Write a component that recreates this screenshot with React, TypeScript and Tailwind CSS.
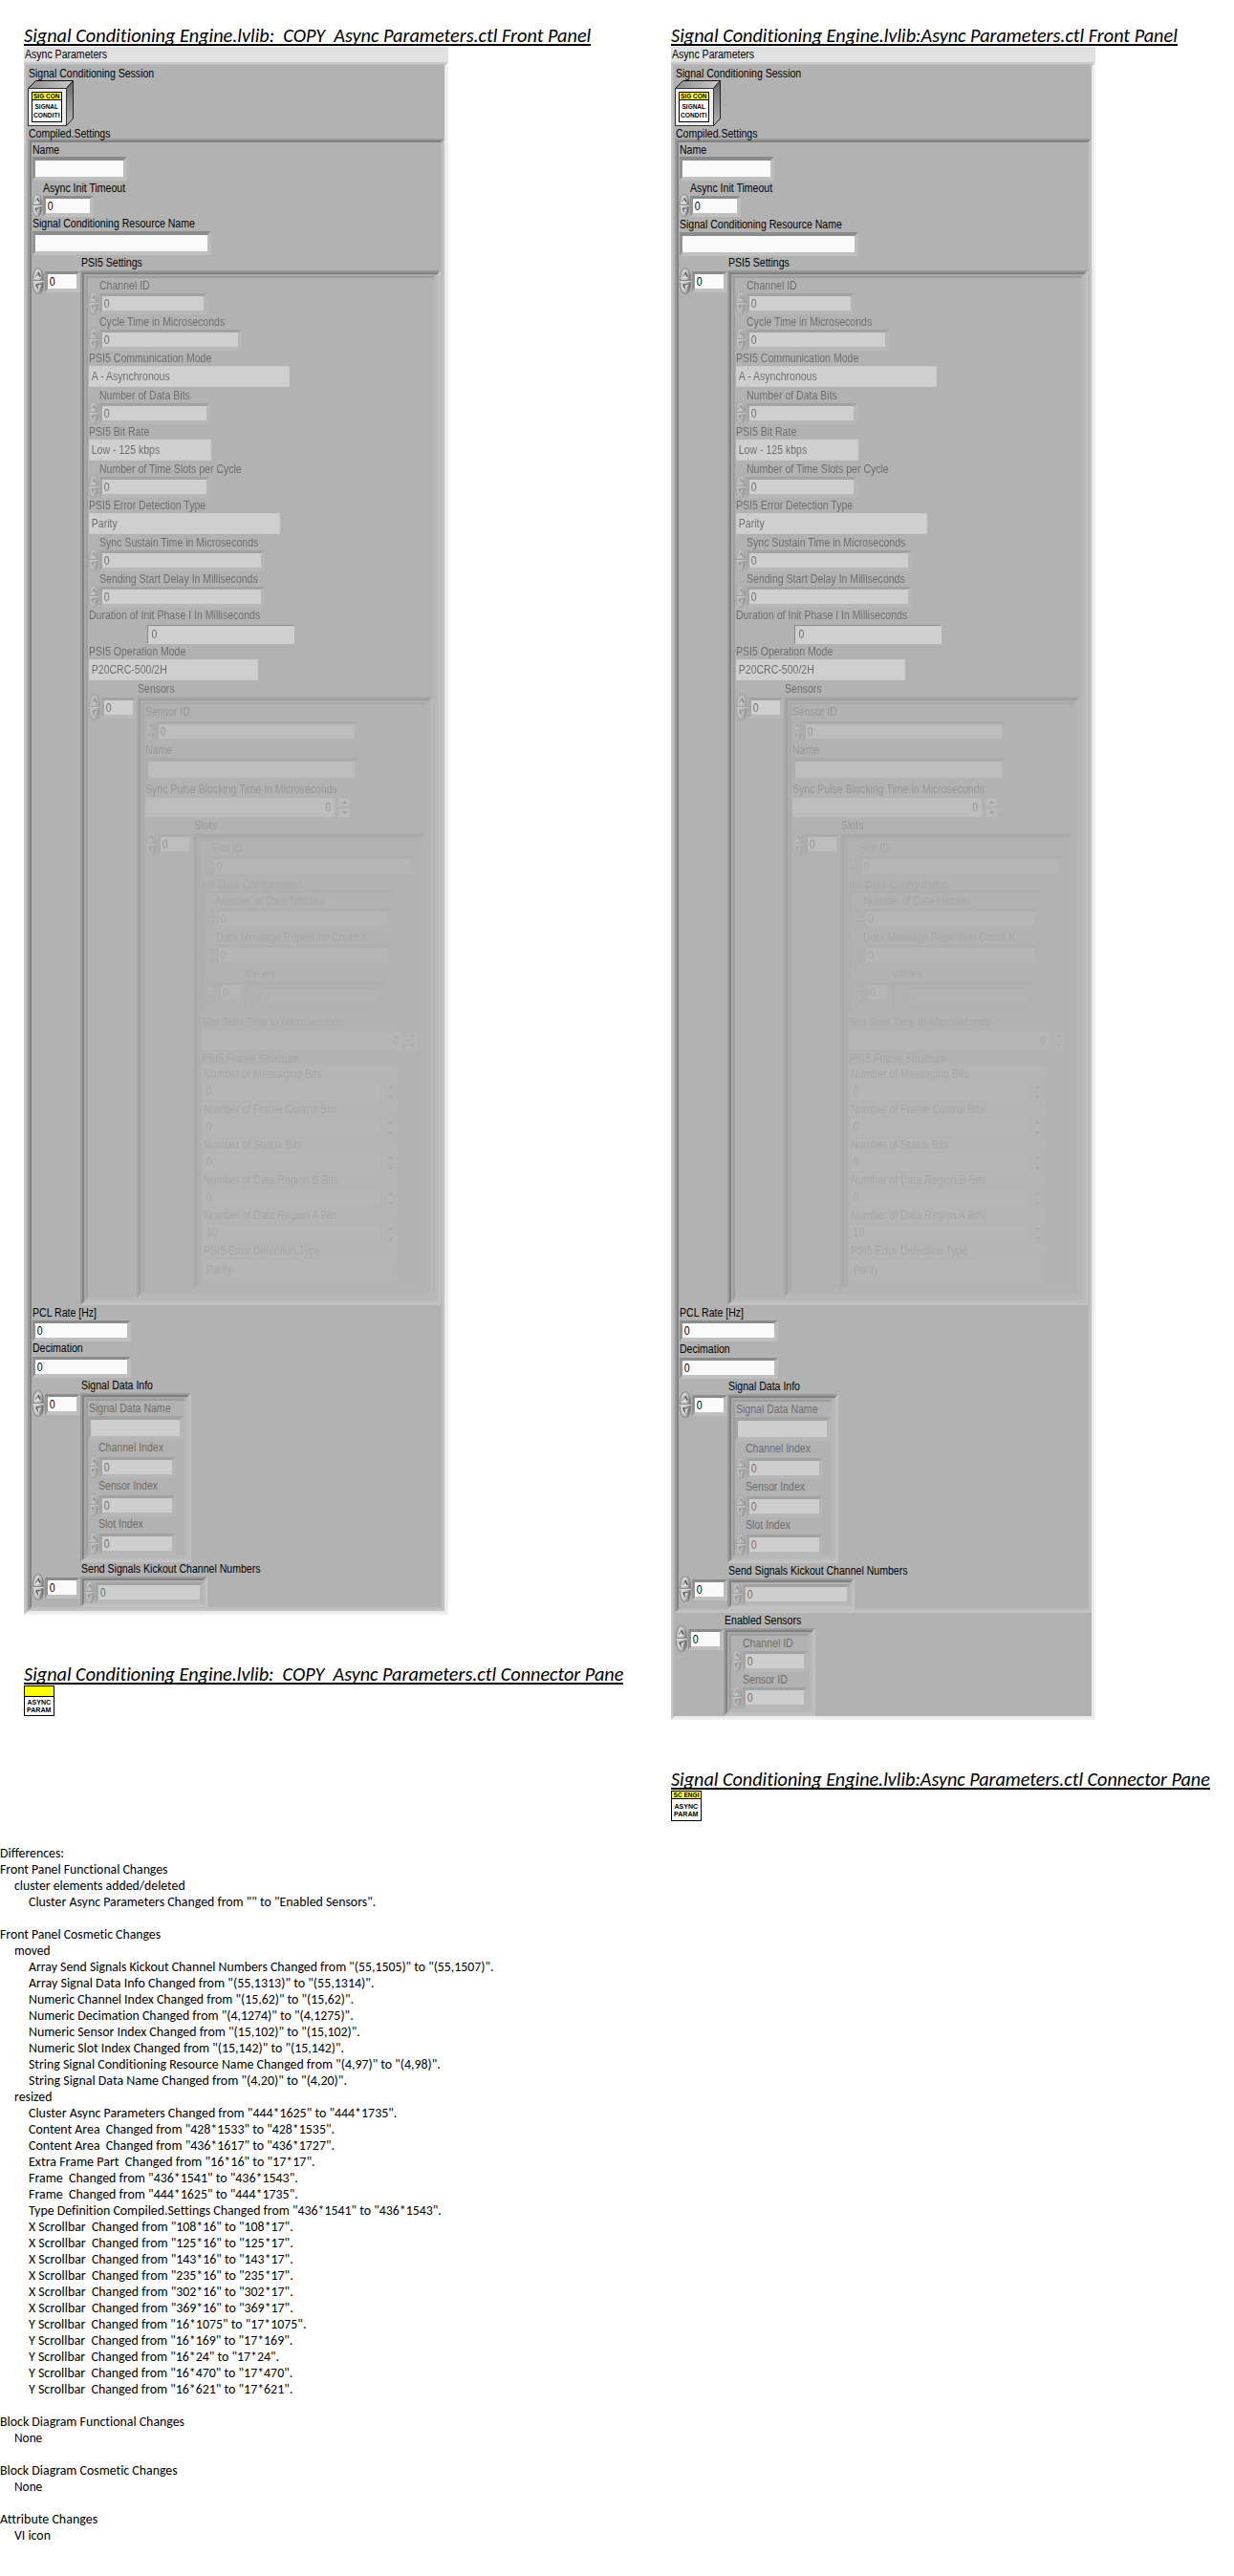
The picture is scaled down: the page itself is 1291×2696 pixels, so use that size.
import { useLayoutEffect, useRef, useState, type ReactNode } from "react";
import clsx from "clsx";

const SANS = "font-['Liberation_Sans',Arial,sans-serif]";
const HUMANIST = "font-[Carlito,Calibri,Lato,sans-serif]";

/* Text set to a given measure, whatever the natural width of the font. */
function FitText({ children, width, className }: { children: string; width: number; className?: string }) {
  const ref = useRef<HTMLSpanElement>(null);
  const [scale, setScale] = useState(1);
  useLayoutEffect(() => {
    if (ref.current) setScale(width / ref.current.offsetWidth);
  }, [width]);
  return (
    <span
      ref={ref}
      className={clsx("block w-max origin-left whitespace-pre text-black [font-variant-ligatures:none]", HUMANIST, className)}
      style={{ transform: `scaleX(${scale})` }}
    >
      {children}
    </span>
  );
}

/* ---------- basic controls ---------- */

function Label({ children, className }: { children: string; className?: string }) {
  return (
    <div className={clsx("h-[14px] pt-px", className)}>
      <span className={clsx("block w-max origin-left scale-x-[0.878] text-[12px] leading-[14px] whitespace-pre text-black", SANS)}>
        {children}
      </span>
    </div>
  );
}

function Value({ children, className }: { children?: string; className?: string }) {
  return (
    <span className={clsx("block w-max origin-left scale-x-[0.878] text-[12px] whitespace-pre text-black", SANS, className)}>
      {children}
    </span>
  );
}

const BEVEL = "border-t-[#8b8b8b] border-l-[#939393] border-r-[#bcbcbc] border-b-[#c0c0c0]";

function Field({ value, className }: { value?: string; className?: string }) {
  return (
    <div className={clsx("h-[22px] shrink-0 border-t-[3px] border-r-4 border-b-4 border-l-[3px] bg-[#fafafa]", BEVEL, className)}>
      <Value className="pl-[2px] leading-[16px]">{value}</Value>
    </div>
  );
}

function StringField({ className }: { className?: string }) {
  return <div className={clsx("h-[25px] shrink-0 border-4 border-l-[3px] bg-[#fafafa]", BEVEL, className)} />;
}

function Spinner({ className }: { className?: string }) {
  return (
    <svg viewBox="0 0 12 24" preserveAspectRatio="none" className={clsx("shrink-0", className)}>
      <defs>
        <linearGradient id="knob" x1="0" x2="1" y1="0" y2="0.25">
          <stop offset="0" stopColor="#a2a2a2" />
          <stop offset="0.35" stopColor="#d6d6d6" />
          <stop offset="0.7" stopColor="#bdbdbd" />
          <stop offset="1" stopColor="#6e6e6e" />
        </linearGradient>
      </defs>
      <path d="M6 0.6C9 0.6 11 5 11 12S9 23.4 6 23.4 1 19 1 12 3 0.6 6 0.6Z" fill="url(#knob)" stroke="#8c8c8c" strokeWidth="0.9" />
      <path d="M1 11.5h10" stroke="#858585" strokeWidth="1" />
      <path d="M1 12.5h10" stroke="#dedede" strokeWidth="1" />
      <path d="M3.6 8.6 6 4.6" fill="none" stroke="#8a8a8a" strokeWidth="1" />
      <path d="M4 8.6h4" fill="none" stroke="#f0f0f0" strokeWidth="1" />
      <path d="M6 4.4 7.8 8.4" stroke="#3c3c3c" strokeWidth="1" />
      <path d="M4 15.2h4M4 15.4 6 19" fill="none" stroke="#4a4a4a" strokeWidth="1" />
      <path d="M8 15.4 6 19" stroke="#e8e8e8" strokeWidth="1" />
    </svg>
  );
}

function Num({ w, className }: { w: string; className?: string }) {
  return (
    <div className={clsx("flex h-[24px] items-end", className)}>
      <Spinner className="h-[24px] w-[12px]" />
      <Field value="0" className={w} />
    </div>
  );
}

function Ring({ children, w, ticks = true }: { children: string; w: string; ticks?: boolean }) {
  return (
    <div className={clsx("relative mt-[2px] mb-px ml-px h-[22px] border border-[#f0f0f0] bg-[#fafafa]", w)}>
      <Value className="pl-[2px] leading-[21px]">{children}</Value>
      {ticks && (
        <>
          <i className="absolute top-0 left-[11px] h-[3px] w-px bg-[#b8b8b8]" />
          <i className="absolute bottom-0 left-[11px] h-[2px] w-px bg-[#b8b8b8]" />
        </>
      )}
    </div>
  );
}

function Arrow({ down, className }: { down?: boolean; className?: string }) {
  return (
    <span className={clsx("flex items-center justify-center border border-[#d8d8d8] bg-[#f0f0f0]", className)}>
      <svg viewBox="0 0 7 4" className="h-[3px] w-[7px]">
        <path d={down ? "M0 0h7L3.5 4z" : "M0 4h7L3.5 0z"} fill="#303030" />
      </svg>
    </span>
  );
}

function SystemNumeric({ w }: { w: string }) {
  return (
    <div className="mt-[3px] mb-px ml-px flex h-[20px] gap-1">
      <div className={clsx("flex justify-end border border-[#eeeeee] bg-[#fafafa]", w)}>
        <Value className="origin-right pr-[3px] leading-[19px]">0</Value>
      </div>
      <div className="flex flex-col justify-between">
        <Arrow className="h-[9px] w-[12px]" />
        <Arrow down className="h-[9px] w-[12px]" />
      </div>
    </div>
  );
}

/* Recessed cluster border: two 2px bevel steps. */
function Frame({ children, className }: { children?: ReactNode; className?: string }) {
  return (
    <div className={clsx("shrink-0 border-2 border-t-[#9a9a9a] border-r-[#c2c2c2] border-b-[#c2c2c2] border-l-[#9c9c9c]", className)}>
      <div className="h-full border-2 border-t-[#808080] border-r-[#bababa] border-b-[#bebebe] border-l-[#828282]">{children}</div>
    </div>
  );
}

/* Array shell: index display on the left, element frame on the right. */
function ArrayControl({ label, labelPad, indexW = "w-[37px]", frame, children, className }: {
  label: string;
  labelPad: string;
  indexW?: string;
  frame: string;
  children: ReactNode;
  className?: string;
}) {
  return (
    <div className={className}>
      <Label className={labelPad}>{label}</Label>
      <div className="mt-[2px] flex items-start">
        <Spinner className="-mt-[3px] h-[28px] w-[14px]" />
        <Field value="0" className={clsx("mt-px", indexW)} />
        <Frame className={frame}>
          <div className="h-full opacity-40">{children}</div>
        </Frame>
      </div>
    </div>
  );
}

/* ---------- icons ---------- */

function PixelText({ x, y, w, children }: { x: number; y: number; w: number; children: string }) {
  return (
    <text x={x} y={y} textLength={w} lengthAdjust="spacingAndGlyphs" fontSize="7" fontWeight="700" fontFamily="Liberation Sans, Arial, sans-serif" fill="#000">
      {children}
    </text>
  );
}

function SessionCube() {
  return (
    <svg width="48" height="48" viewBox="0 0 48 48" className="mt-px block">
      <defs>
        <linearGradient id="top" x1="0" x2="1">
          <stop offset="0" stopColor="#8d8d8d" />
          <stop offset="1" stopColor="#cfc9cf" />
        </linearGradient>
        <linearGradient id="side" x1="0" x2="0" y1="0" y2="1">
          <stop offset="0" stopColor="#6a6a6a" />
          <stop offset="1" stopColor="#b5b5b5" />
        </linearGradient>
      </defs>
      <path d="M0.5 8.5 8.5 0.5H47.5L40.5 8.5Z" fill="url(#top)" stroke="#111" />
      <path d="M40.5 8.5 47.5 0.5V40L40.5 47.5Z" fill="url(#side)" stroke="#222" />
      <rect x="0.5" y="8.5" width="40" height="39" fill="#ececec" stroke="#333" />
      <rect x="4.5" y="12.5" width="31" height="31" fill="#fff" stroke="#000" />
      <rect x="5" y="13" width="30" height="7" fill="#ffff33" />
      <path d="M4 20.5H36" stroke="#000" />
      <PixelText x={6} y={19} w={27.5}>SIG CON</PixelText>
      <PixelText x={7.5} y={30} w={24.5}>SIGNAL</PixelText>
      <PixelText x={6} y={39} w={27.5}>CONDITI</PixelText>
    </svg>
  );
}

function ConnectorIcon({ banner }: { banner?: string }) {
  const split = banner ? 8.5 : 11.5;
  const shift = banner ? -1 : 0;
  return (
    <svg width="32" height="32" viewBox="0 0 32 32" className="mt-px block">
      <rect x="0.5" y="0.5" width="31" height="31" fill="#fff" stroke="#000" />
      <rect x="1" y="1" width="30" height={split - 1} fill={banner ? "#ffff55" : "#ffff00"} />
      <path d={`M0 ${split}H32`} stroke="#000" />
      {banner && <PixelText x={2.5} y={7} w={27}>{banner}</PixelText>}
      <PixelText x={3.5} y={20 + shift} w={24.5}>ASYNC</PixelText>
      <PixelText x={3} y={28.2 + shift} w={25.5}>PARAM</PixelText>
    </svg>
  );
}

/* ---------- front panel clusters ---------- */

const FRAME_BITS = [
  ["Number of Messaging Bits", "0"],
  ["Number of Frame Control Bits", "0"],
  ["Number of Status Bits", "0"],
  ["Number of Data Region B Bits", "0"],
  ["Number of Data Region A Bits", "10"],
];

function SlotCluster() {
  return (
    <Frame className="h-full">
      <Label className="pl-[12px]">Slot ID</Label>
      <Num w="w-[212px]" />
      <Label className="pl-px">Init Data Configuration</Label>
      <Frame className="-mt-px h-[132px] w-[204px]">
        <Label className="pl-[12px]">Number of Data Nibbles</Label>
        <Num w="w-[184px]" />
        <Label className="pl-[12px]">Data Message Repetition Count K</Label>
        <Num w="w-[184px]" />
        <ArrayControl label="Values" labelPad="pl-[42px]" indexW="w-[27px]" frame="h-[32px] w-[150px]">
          <Num w="w-[130px]" />
        </ArrayControl>
      </Frame>
      <Label className="-mt-px pl-px">Slot Start Time In Microseconds</Label>
      <SystemNumeric w="w-[210px]" />
      <Label className="pl-px">PSI5 Frame Structure</Label>
      <div className="mt-px ml-px h-[227px] w-[205px] bg-[#f4f4f4] pt-px pl-px">
        {FRAME_BITS.map(([name, value]) => (
          <div key={name}>
            <Label className="pl-px">{name}</Label>
            <div className="mt-[2px] flex h-[21px] gap-[2px]">
              <div className="w-[188px] border border-[#c4c4c4] bg-[#fafafa]">
                <Value className="pl-[3px] leading-[19px]">{value}</Value>
              </div>
              <div className="flex flex-col justify-between">
                <Arrow className="h-[10px] w-[13px] border-[#c4c4c4]" />
                <Arrow down className="h-[10px] w-[13px] border-[#c4c4c4]" />
              </div>
            </div>
          </div>
        ))}
        <Label className="pl-px">PSI5 Error Detection Type</Label>
        <div className="mt-[2px] h-[23px] w-[202px] border border-[#c4c4c4] bg-[#fafafa]">
          <Value className="pl-[3px] leading-[22px]">Parity</Value>
        </div>
      </div>
    </Frame>
  );
}

function SensorCluster() {
  return (
    <Frame className="h-full">
      <Label className="pl-px">Sensor ID</Label>
      <Num w="w-[212px]" className="mt-[2px]" />
      <Label className="pl-px">Name</Label>
      <StringField className="mt-[2px] ml-px w-[223px]" />
      <Label className="pl-px">Sync Pulse Blocking Time In Microseconds</Label>
      <SystemNumeric w="w-[198px]" />
      <ArrayControl label="Slots" labelPad="pl-[52px]" frame="h-[478px] w-[243px]">
        <SlotCluster />
      </ArrayControl>
    </Frame>
  );
}

function ChannelCluster() {
  return (
    <Frame className="h-full">
      <Label className="pl-[12px]">Channel ID</Label>
      <Num w="w-[113px]" />
      <Label className="pl-[12px]">Cycle Time in Microseconds</Label>
      <Num w="w-[149px]" />
      <Label className="pl-px">PSI5 Communication Mode</Label>
      <Ring w="w-[210px]">A - Asynchronous</Ring>
      <Label className="pl-[12px]">Number of Data Bits</Label>
      <Num w="w-[116px]" />
      <Label className="pl-px">PSI5 Bit Rate</Label>
      <Ring w="w-[128px]">Low - 125 kbps</Ring>
      <Label className="pl-[12px]">Number of Time Slots per Cycle</Label>
      <Num w="w-[116px]" />
      <Label className="pl-px">PSI5 Error Detection Type</Label>
      <Ring w="w-[200px]">Parity</Ring>
      <Label className="pl-[12px]">Sync Sustain Time in Microseconds</Label>
      <Num w="w-[173px]" />
      <Label className="pl-[12px]">Sending Start Delay In Milliseconds</Label>
      <Num w="w-[173px]" />
      <Label className="pl-px">Duration of Init Phase I In Milliseconds</Label>
      <div className="mt-[4px] ml-[62px] h-[20px] w-[154px] border border-t-[#4c4c4c] border-r-[#ffffff] border-b-[#ffffff] border-l-[#4c4c4c] bg-[#fafafa]">
        <Value className="pl-[4px] leading-[19px]">0</Value>
      </div>
      <Label className="pl-px">PSI5 Operation Mode</Label>
      <Ring w="w-[177px]" ticks={false}>P20CRC-500/2H</Ring>
      <ArrayControl label="Sensors" labelPad="pl-[52px]" frame="h-[629px] w-[310px]">
        <SensorCluster />
      </ArrayControl>
    </Frame>
  );
}

function SignalDataCluster() {
  return (
    <Frame className="h-full">
      <Label className="pl-px">Signal Data Name</Label>
      <StringField className="mt-[2px] w-[100px] border-l-4" />
      {["Channel Index", "Sensor Index", "Slot Index"].map((name) => (
        <div key={name}>
          <Label className="pl-[11px]">{name}</Label>
          <Num w="w-[80px]" className="mt-[2px]" />
        </div>
      ))}
    </Frame>
  );
}

function FrontPanel({ revised = false }: { revised?: boolean }) {
  return (
    <section className="w-[444px]">
      <div className="h-[16px] bg-[#e1e1e1]">
        <Label className="pl-px">Async Parameters</Label>
      </div>
      <div
        className={clsx(
          "border-2 border-t-[#cacaca] border-r-[#f0f0f0] border-b-[#f0f0f0] border-l-[#c8c8c8] bg-[#b2b2b2]",
          revised ? "h-[1735px]" : "h-[1625px]",
        )}
      >
        <div className="h-full border-2 border-t-[#b8b8b8] border-r-[#e9e9e9] border-b-[#e9e9e9] border-l-[#b6b6b6]">
          <Label className="pl-px">Signal Conditioning Session</Label>
          <SessionCube />
          <Label className="pl-px">Compiled.Settings</Label>
          <Frame className={clsx("-mt-px", revised ? "h-[1543px]" : "h-[1541px]")}>
            <Label className="pl-px">Name</Label>
            <StringField className="mt-px ml-px w-[99px]" />
            <Label className="pl-[12px]">Async Init Timeout</Label>
            <Num w="w-[53px]" />
            <Label className={clsx("pl-px", !revised && "-mt-px")}>Signal Conditioning Resource Name</Label>
            <StringField className="mt-[2px] ml-px w-[187px]" />
            <ArrayControl className={clsx(revised && "-mt-px")} label="PSI5 Settings" labelPad="pl-[52px]" frame="h-[1083px] w-[377px]">
              <ChannelCluster />
            </ArrayControl>
            <Label className="pl-px">PCL Rate [Hz]</Label>
            <Field value="0" className="mt-[2px] ml-px w-[103px]" />
            <Label className={clsx("pl-px", !revised && "-mt-px")}>Decimation</Label>
            <Field value="0" className="mt-[3px] ml-px w-[103px]" />
            <ArrayControl label="Signal Data Info" labelPad="pl-[52px]" frame="h-[177px] w-[116px]">
              <SignalDataCluster />
            </ArrayControl>
            <ArrayControl
              className={clsx(!revised && "-mt-px")}
              label="Send Signals Kickout Channel Numbers"
              labelPad="pl-[52px]"
              frame="h-[32px] w-[133px]"
            >
              <Num w="w-[113px]" />
            </ArrayControl>
          </Frame>
          {revised && (
            <ArrayControl label="Enabled Sensors" labelPad="pl-[52px]" frame="h-[92px] w-[96px]">
              <Frame className="h-full">
                <Label className="pl-[12px]">Channel ID</Label>
                <Num w="w-[68px]" />
                <Label className="pl-[12px]">Sensor ID</Label>
                <Num w="w-[68px]" />
              </Frame>
            </ArrayControl>
          )}
        </div>
      </div>
    </section>
  );
}

function Heading({ children, width, className }: { children: string; width: number; className: string }) {
  return (
    <h2 className={clsx("h-[24px] overflow-y-clip border-b-2 border-black", className)}>
      <FitText width={width} className="text-[21px] leading-[26px] italic">
        {children}
      </FitText>
    </h2>
  );
}

/* ---------- difference report: indent level, measure, text ---------- */

const REPORT: [number, number, string][] = [
  [0, 67, "Differences:"],
  [0, 175, "Front Panel Functional Changes"],
  [1, 179, "cluster elements added/deleted"],
  [2, 363, 'Cluster Async Parameters Changed from "" to "Enabled Sensors".'],
  [0, 0, ""],
  [0, 168, "Front Panel Cosmetic Changes"],
  [1, 37.5, "moved"],
  [2, 486, 'Array Send Signals Kickout Channel Numbers Changed from "(55,1505)" to "(55,1507)".'],
  [2, 361.5, 'Array Signal Data Info Changed from "(55,1313)" to "(55,1314)".'],
  [2, 340, 'Numeric Channel Index Changed from "(15,62)" to "(15,62)".'],
  [2, 340, 'Numeric Decimation Changed from "(4,1274)" to "(4,1275)".'],
  [2, 346.5, 'Numeric Sensor Index Changed from "(15,102)" to "(15,102)".'],
  [2, 330.5, 'Numeric Slot Index Changed from "(15,142)" to "(15,142)".'],
  [2, 430.5, 'String Signal Conditioning Resource Name Changed from "(4,97)" to "(4,98)".'],
  [2, 333, 'String Signal Data Name Changed from "(4,20)" to "(4,20)".'],
  [1, 39.5, "resized"],
  [2, 385.5, 'Cluster Async Parameters Changed from "444*1625" to "444*1735".'],
  [2, 320.5, 'Content Area  Changed from "428*1533" to "428*1535".'],
  [2, 320.5, 'Content Area  Changed from "436*1617" to "436*1727".'],
  [2, 299.5, 'Extra Frame Part  Changed from "16*16" to "17*17".'],
  [2, 281.5, 'Frame  Changed from "436*1541" to "436*1543".'],
  [2, 281.5, 'Frame  Changed from "444*1625" to "444*1735".'],
  [2, 431.5, 'Type Definition Compiled.Settings Changed from "436*1541" to "436*1543".'],
  [2, 276.5, 'X Scrollbar  Changed from "108*16" to "108*17".'],
  [2, 276.5, 'X Scrollbar  Changed from "125*16" to "125*17".'],
  [2, 276.5, 'X Scrollbar  Changed from "143*16" to "143*17".'],
  [2, 276.5, 'X Scrollbar  Changed from "235*16" to "235*17".'],
  [2, 276.5, 'X Scrollbar  Changed from "302*16" to "302*17".'],
  [2, 276.5, 'X Scrollbar  Changed from "369*16" to "369*17".'],
  [2, 290.5, 'Y Scrollbar  Changed from "16*1075" to "17*1075".'],
  [2, 276.5, 'Y Scrollbar  Changed from "16*169" to "17*169".'],
  [2, 262.5, 'Y Scrollbar  Changed from "16*24" to "17*24".'],
  [2, 276.5, 'Y Scrollbar  Changed from "16*470" to "17*470".'],
  [2, 276.5, 'Y Scrollbar  Changed from "16*621" to "17*621".'],
  [0, 0, ""],
  [0, 193, "Block Diagram Functional Changes"],
  [1, 29.5, "None"],
  [0, 0, ""],
  [0, 186, "Block Diagram Cosmetic Changes"],
  [1, 29.5, "None"],
  [0, 0, ""],
  [0, 102, "Attribute Changes"],
  [1, 37.5, "VI icon"],
];

const INDENT = ["pl-0", "pl-[15px]", "pl-[30px]"];

export default function App() {
  return (
    <main className="h-[2696px] w-[1291px] overflow-hidden bg-white">
      <div className="flex h-[1931px] items-start pt-[24px] pl-[25px]">
        <div className="w-[677px] shrink-0">
          <Heading width={593} className="mb-px w-[593px]">
            Signal Conditioning Engine.lvlib:  COPY  Async Parameters.ctl Front Panel
          </Heading>
          <FrontPanel />
          <Heading width={627} className="mt-[49px] w-[627px]">
            Signal Conditioning Engine.lvlib:  COPY  Async Parameters.ctl Connector Pane
          </Heading>
          <ConnectorIcon />
        </div>
        <div className="shrink-0">
          <Heading width={530} className="mb-px w-[530px]">
            Signal Conditioning Engine.lvlib:Async Parameters.ctl Front Panel
          </Heading>
          <FrontPanel revised />
          <Heading width={564} className="mt-[49px] w-[564px]">
            Signal Conditioning Engine.lvlib:Async Parameters.ctl Connector Pane
          </Heading>
          <ConnectorIcon banner="SC ENGI" />
        </div>
      </div>
      <div>
        {REPORT.map(([level, width, line], i) => (
          <div key={i} className={clsx("h-[17px]", INDENT[level])}>
            {line && (
              <FitText width={width} className="text-[14px] leading-[17px]">
                {line}
              </FitText>
            )}
          </div>
        ))}
      </div>
    </main>
  );
}
